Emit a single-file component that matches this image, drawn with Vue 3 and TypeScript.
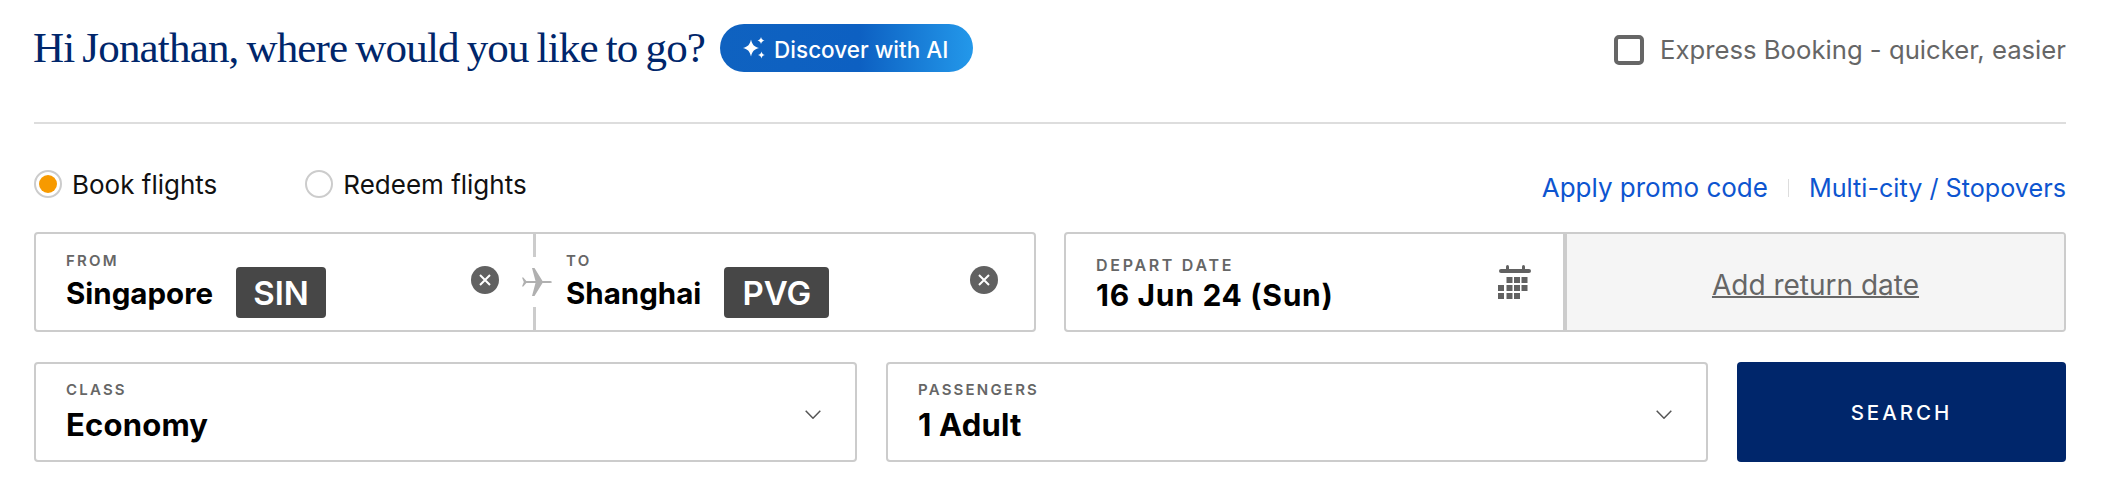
<script setup lang="ts">
const calendarCells: { x: number; y: number }[] = [
  { x: 8.5, y: 12 }, { x: 16, y: 12 }, { x: 23.5, y: 12 },
  { x: 0, y: 20 }, { x: 8.5, y: 20 }, { x: 16, y: 20 }, { x: 23.5, y: 20 },
  { x: 0, y: 28 }, { x: 8.5, y: 28 }, { x: 16, y: 28 },
]
</script>

<template>
  <div class="page">
    <header class="top">
      <div class="greeting">
        <h1 class="title">Hi Jonathan, where would you like to go?</h1>
        <button class="discover" type="button">
          <svg class="spark" viewBox="0 0 23 22" width="23" height="22" aria-hidden="true">
            <path d="M8 2.500C9.200 7.500 11 9.800 16 11 11 12.200 9.200 14.500 8 19.500 6.800 14.500 5 12.200 0 11 5 9.800 6.800 7.500 8 2.500z" fill="#fff" />
            <path d="M18 0c.6 2.200 1.300 2.900 3.500 3.500-2.200.6-2.900 1.300-3.500 3.500-.6-2.200-1.300-2.900-3.500-3.500 2.200-.6 2.900-1.300 3.500-3.500z" fill="#fff" />
            <path d="M18.500 14.500c.6 2.200 1.300 2.900 3.500 3.500-2.200.6-2.900 1.300-3.500 3.500-.6-2.200-1.300-2.900-3.500-3.500 2.200-.6 2.900-1.300 3.500-3.500z" fill="#fff" />
          </svg>
          <span class="discover-text">Discover with AI</span>
        </button>
      </div>
      <label class="express">
        <span class="checkbox"></span>
        <span class="express-text">Express Booking - quicker, easier</span>
      </label>
    </header>

    <div class="divider"></div>

    <div class="options">
      <div class="radios">
        <label class="radio-item">
          <span class="radio radio-on"><span class="radio-dot"></span></span>
          <span class="radio-text">Book flights</span>
        </label>
        <label class="radio-item">
          <span class="radio"></span>
          <span class="radio-text">Redeem flights</span>
        </label>
      </div>
      <div class="links">
        <a class="link link-promo">Apply promo code</a>
        <span class="link-sep"></span>
        <a class="link link-multi">Multi-city / Stopovers</a>
      </div>
    </div>

    <div class="row-one">
      <div class="box">
        <div class="field field-from">
          <div class="field-main">
            <div class="label">FROM</div>
            <div class="place">
              <span class="value">Singapore</span>
              <span class="code code-sin">SIN</span>
            </div>
          </div>
          <svg class="clear" viewBox="0 0 28 28" width="28" height="28" aria-hidden="true">
            <circle cx="14" cy="14" r="14" fill="#616161" />
            <path d="M9 9l10 10M19 9L9 19" stroke="#fff" stroke-width="2" fill="none" />
          </svg>
          <span class="plane-wrap">
            <svg viewBox="0 0 30 30" width="30" height="30" aria-hidden="true">
              <path d="M0 10.500h1.300l3 3.400H13.500L10 1h2.500l8 12.900H27c1.700 0 3 .4 3 1.100s-1.300 1.100-3 1.100h-6.500L12.500 29H10l3.500-12.900H4.300l-3 3.400H0l1.800-4.500z" fill="#b0b0b0" />
            </svg>
          </span>
        </div>
        <div class="field field-to">
          <div class="field-main">
            <div class="label">TO</div>
            <div class="place">
              <span class="value">Shanghai</span>
              <span class="code code-pvg">PVG</span>
            </div>
          </div>
          <svg class="clear" viewBox="0 0 28 28" width="28" height="28" aria-hidden="true">
            <circle cx="14" cy="14" r="14" fill="#616161" />
            <path d="M9 9l10 10M19 9L9 19" stroke="#fff" stroke-width="2" fill="none" />
          </svg>
        </div>
      </div>

      <div class="box">
        <div class="field field-date">
          <div class="field-main">
            <div class="label label-date">DEPART DATE</div>
            <div class="value date-value">16 Jun 24 (Sun)</div>
          </div>
          <svg class="calendar" viewBox="0 0 33 35" width="33" height="35" aria-hidden="true">
            <rect x="1" y="4" width="32" height="4" rx="2" fill="#616161" />
            <rect x="8" y="0" width="3" height="6" rx="1.500" fill="#616161" />
            <rect x="24" y="0" width="3" height="6" rx="1.500" fill="#616161" />
            <rect v-for="c in calendarCells" :key="`${c.x}-${c.y}`" :x="c.x" :y="c.y" width="6" height="6" fill="#616161" />
          </svg>
        </div>
        <div class="return-date"><span class="return-text">Add return date</span></div>
      </div>
    </div>

    <div class="row-two">
      <div class="select select-class">
        <div class="select-main">
          <div class="label">CLASS</div>
          <div class="value select-value">Economy</div>
        </div>
        <svg class="chevron" viewBox="0 0 16 9" width="16" height="9" aria-hidden="true">
          <path d="M.7.7L8 8.200 15.300.7" stroke="#555" stroke-width="1.500" fill="none" />
        </svg>
      </div>
      <div class="select select-pax">
        <div class="select-main">
          <div class="label">PASSENGERS</div>
          <div class="value select-value">1 Adult</div>
        </div>
        <svg class="chevron" viewBox="0 0 16 9" width="16" height="9" aria-hidden="true">
          <path d="M.7.7L8 8.200 15.300.7" stroke="#555" stroke-width="1.500" fill="none" />
        </svg>
      </div>
      <button class="search" type="button">SEARCH</button>
    </div>
  </div>
</template>

<style>
html,
body {
  margin: 0;
  background: #fff;
}
</style>

<style scoped>
.page {
  box-sizing: border-box;
  width: 2105px;
  height: 501px;
  padding: 24px 39px 0 34px;
  font-family: "Inter", "Liberation Sans", sans-serif;
  color: #111;
  background: #fff;
  overflow: hidden;
}

.top {
  display: flex;
  justify-content: space-between;
  align-items: center;
  height: 48px;
}

.greeting {
  display: flex;
  align-items: center;
  gap: 15px;
}

.title {
  margin: 0 0 0 -1px;
  font-family: "Liberation Serif", serif;
  font-size: 43px;
  font-weight: 400;
  line-height: 48px;
  letter-spacing: -0.82px;
  word-spacing: -2px;
  color: #00266b;
  white-space: nowrap;
}

.discover {
  display: flex;
  align-items: center;
  gap: 8px;
  box-sizing: border-box;
  width: 253px;
  height: 48px;
  padding: 0 0 0 23px;
  border: 0;
  border-radius: 24px;
  background: linear-gradient(90deg, #0f62c0 0%, #0d60c2 55%, #2398ea 100%);
  color: #fff;
  font-family: inherit;
  font-size: 22.500px;
  font-weight: 500;
  white-space: nowrap;
}

.discover-text {
  margin-top: 2px;
}

.spark {
  flex: none;
}

.express {
  display: flex;
  align-items: center;
  gap: 16px;
  margin-top: 3px;
  color: #666;
  font-size: 25.700px;
  white-space: nowrap;
}

.checkbox {
  box-sizing: border-box;
  width: 30px;
  height: 30px;
  border: 4px solid #666;
  border-radius: 5px;
}

.divider {
  height: 2px;
  margin-top: 50px;
  background: #ddd;
}

.options {
  display: flex;
  justify-content: space-between;
  align-items: center;
  height: 28px;
  margin-top: 46px;
}

.radios {
  display: flex;
  gap: 88px;
}

.radio-item {
  display: flex;
  align-items: center;
  gap: 10px;
  font-size: 26px;
  line-height: 28px;
  white-space: nowrap;
}

.radio-text {
  margin-top: 2px;
}

.radio {
  display: flex;
  align-items: center;
  justify-content: center;
  box-sizing: border-box;
  width: 28px;
  height: 28px;
  border: 2px solid #ccc;
  border-radius: 50%;
}

.radio-dot {
  width: 18px;
  height: 18px;
  border-radius: 50%;
  background: #f79a00;
}

.links {
  display: flex;
  align-items: center;
  gap: 20px;
  padding-top: 7px;
  line-height: 28px;
  color: #0d55d0;
  white-space: nowrap;
}

.link-promo {
  font-size: 26px;
}

.link-multi {
  font-size: 25.200px;
}

.link-sep {
  width: 1px;
  height: 18px;
  background: #ddd;
}

.row-one {
  display: grid;
  grid-template-columns: 1002px 1002px;
  gap: 28px;
  margin-top: 34px;
}

.box {
  display: flex;
  box-sizing: border-box;
  height: 100px;
  border: 2px solid #ccc;
  border-radius: 4px;
}

.field {
  position: relative;
  display: flex;
  align-items: center;
  justify-content: space-between;
  box-sizing: border-box;
}

.field-main {
  padding-top: 7px;
}

.field-from {
  width: 500px;
  padding: 0 34px 0 30px;
  border-right: 3px solid #ccc;
}

.field-to {
  flex: 1;
  padding: 0 36px 0 30px;
}

.field-date {
  width: 501px;
  padding: 0 32px 0 30px;
  border-right: 4px solid #ccc;
}

.plane-wrap {
  position: absolute;
  top: 23px;
  right: -20px;
  display: flex;
  align-items: center;
  justify-content: center;
  width: 32px;
  height: 50px;
  background: #fff;
}

.label {
  font-size: 15px;
  font-weight: 600;
  line-height: 16px;
  letter-spacing: 2.200px;
  color: #666;
  white-space: nowrap;
}

.label-date {
  font-size: 16px;
  letter-spacing: 2.700px;
}

.value {
  font-size: 29.500px;
  font-weight: 700;
  color: #000;
  white-space: nowrap;
}

.place {
  display: flex;
  align-items: center;
  gap: 23px;
  margin-top: -2px;
}

.code {
  display: flex;
  align-items: center;
  justify-content: center;
  box-sizing: border-box;
  height: 51px;
  border-radius: 4px;
  background: #474747;
  color: #fff;
  font-size: 33px;
  font-weight: 600;
}

.code-sin {
  width: 90px;
}

.code-pvg {
  width: 105px;
}

.clear {
  flex: none;
  margin-top: -4px;
}

.date-value {
  margin-top: 3px;
  font-size: 30px;
  letter-spacing: 0.700px;
  line-height: 38px;
}

.calendar {
  flex: none;
}

.return-date {
  display: flex;
  flex: 1;
  align-items: center;
  justify-content: center;
  background: #f5f5f5;
  border-radius: 0 2px 2px 0;
}

.return-text {
  margin-top: 6px;
  font-size: 28px;
  color: #666;
  text-decoration: underline;
  text-decoration-thickness: 2px;
  white-space: nowrap;
}

.row-two {
  display: flex;
  gap: 29px;
  margin-top: 30px;
}

.select {
  display: flex;
  align-items: center;
  justify-content: space-between;
  box-sizing: border-box;
  height: 100px;
  padding: 0 34px 0 30px;
  border: 2px solid #ccc;
  border-radius: 4px;
}

.select-class {
  width: 823px;
}

.select-pax {
  width: 822px;
}

.select-main {
  padding-top: 2px;
}

.select-value {
  margin-top: 8px;
  line-height: 38px;
  font-size: 31px;
  letter-spacing: 0.200px;
}

.chevron {
  flex: none;
  margin-top: 5px;
}

.search {
  width: 329px;
  height: 100px;
  padding-top: 2px;
  border: 0;
  border-radius: 4px;
  background: #00266b;
  color: #fff;
  font-family: inherit;
  font-size: 20.500px;
  font-weight: 500;
  letter-spacing: 3px;
}
</style>
